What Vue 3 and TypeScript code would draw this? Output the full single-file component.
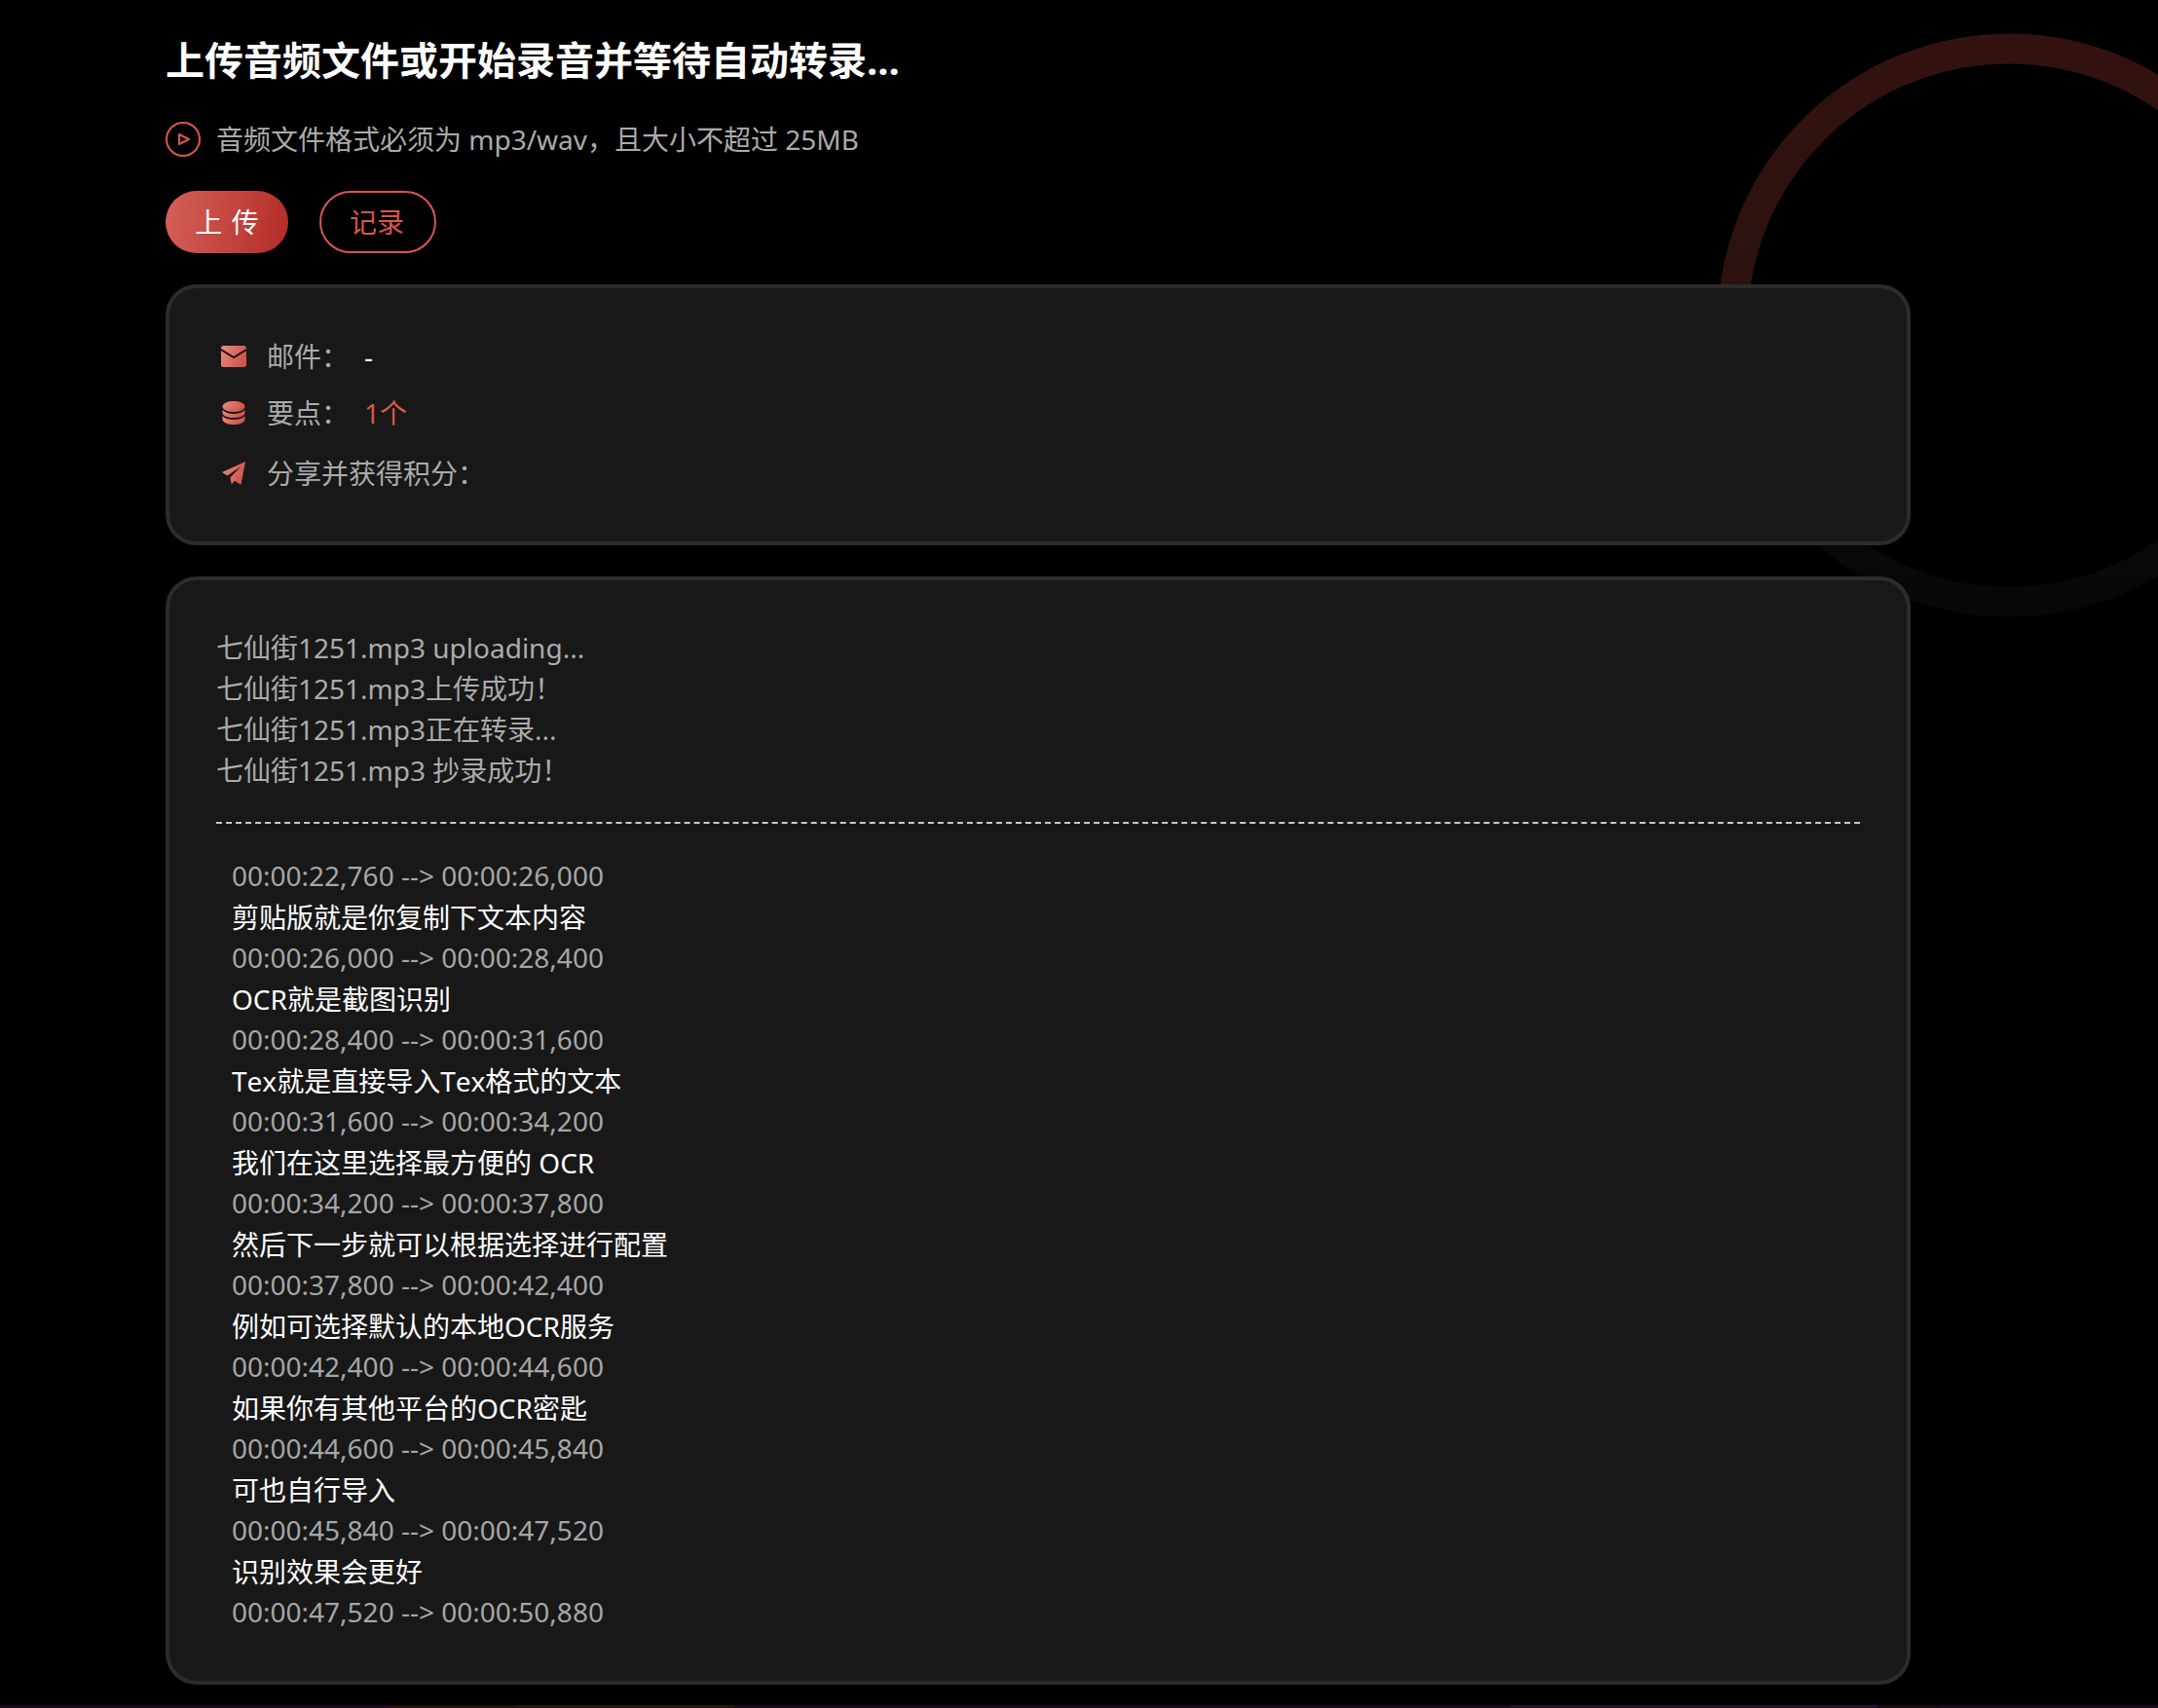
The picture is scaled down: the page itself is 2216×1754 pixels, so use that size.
<script setup lang="ts">
interface Cue { time: string; text: string }
const status: string[] = [
  '七仙街1251.mp3 uploading...',
  '七仙街1251.mp3上传成功！',
  '七仙街1251.mp3正在转录...',
  '七仙街1251.mp3 抄录成功！',
]
const cues: Cue[] = [
  { time: '00:00:22,760 --> 00:00:26,000', text: '剪贴版就是你复制下文本内容' },
  { time: '00:00:26,000 --> 00:00:28,400', text: 'OCR就是截图识别' },
  { time: '00:00:28,400 --> 00:00:31,600', text: 'Tex就是直接导入Tex格式的文本' },
  { time: '00:00:31,600 --> 00:00:34,200', text: '我们在这里选择最方便的 OCR' },
  { time: '00:00:34,200 --> 00:00:37,800', text: '然后下一步就可以根据选择进行配置' },
  { time: '00:00:37,800 --> 00:00:42,400', text: '例如可选择默认的本地OCR服务' },
  { time: '00:00:42,400 --> 00:00:44,600', text: '如果你有其他平台的OCR密匙' },
  { time: '00:00:44,600 --> 00:00:45,840', text: '可也自行导入' },
  { time: '00:00:45,840 --> 00:00:47,520', text: '识别效果会更好' },
  { time: '00:00:47,520 --> 00:00:50,880', text: '' },
]
</script>

<template>
  <div class="page">
    <svg class="ring" width="640" height="640" viewBox="0 0 640 640" aria-hidden="true">
      <defs>
        <linearGradient id="ringGrad" x1="0" y1="0" x2="0" y2="1">
          <stop offset="0" stop-color="#33120f" />
          <stop offset="0.45" stop-color="#2a1210" />
          <stop offset="0.75" stop-color="#0c0908" />
          <stop offset="1" stop-color="#080707" />
        </linearGradient>
      </defs>
      <circle cx="320" cy="320" r="284" fill="none" stroke="url(#ringGrad)" stroke-width="31" />
    </svg>

    <div class="content">
      <h1 class="title">上传音频文件或开始录音并等待自动转录...</h1>
      <div class="hint">
        <svg class="hint-icon" width="36" height="36" viewBox="0 0 36 36" fill="none" stroke="#d9574e" stroke-width="2">
          <circle cx="18" cy="18" r="17" />
          <path d="M14 13 L24 18 L14 23 Z" stroke-linejoin="round" />
        </svg>
        <span>音频文件格式必须为 mp3/wav，且大小不超过 25MB</span>
      </div>
      <div class="actions">
        <button class="btn btn-primary">上 传</button>
        <button class="btn btn-outline">记录</button>
      </div>

      <section class="card info">
        <div class="row">
          <span class="row-icon">
            <svg width="26" height="22" viewBox="0 0 26 22">
              <defs>
                <linearGradient id="ig1" x1="0" y1="0" x2="1" y2="0.4">
                  <stop offset="0" stop-color="#ea8b83" />
                  <stop offset="1" stop-color="#d0544b" />
                </linearGradient>
              </defs>
              <rect width="26" height="22" rx="2.5" fill="url(#ig1)" />
              <path d="M0 4 L13 12 L26 4" fill="none" stroke="#181818" stroke-width="2" />
            </svg>
          </span>
          <span class="label">邮件：</span>
          <span class="value">-</span>
        </div>
        <div class="row row-second">
          <span class="row-icon">
            <svg width="24" height="24" viewBox="0 0 24 24">
              <defs>
                <linearGradient id="ig2" x1="0" y1="0" x2="1" y2="0.4">
                  <stop offset="0" stop-color="#ea8b83" />
                  <stop offset="1" stop-color="#d0544b" />
                </linearGradient>
              </defs>
              <path d="M12 0 C18 0 23.500 2 23.500 5.500 C23.500 9 18 11 12 11 C6 11 0.500 9 0.500 5.500 C0.500 2 6 0 12 0 Z" fill="url(#ig2)" />
              <path d="M0.500 9 C3 11.800 7 13 12 13 C17 13 21 11.800 23.500 9 L23.500 12 C23.500 15 18 17 12 17 C6 17 0.500 15 0.500 12 Z" fill="url(#ig2)" />
              <path d="M0.500 15.200 C3 17.800 7 19 12 19 C17 19 21 17.800 23.500 15.200 L23.500 18.500 C23.500 22 18 24 12 24 C6 24 0.500 22 0.500 18.500 Z" fill="url(#ig2)" />
            </svg>
          </span>
          <span class="label">要点：</span>
          <span class="value accent">1个</span>
        </div>
        <div class="row row-third">
          <span class="row-icon">
            <svg width="24" height="24" viewBox="0 0 24 24">
              <defs>
                <linearGradient id="ig3" x1="0" y1="0" x2="1" y2="0.4">
                  <stop offset="0" stop-color="#ea8b83" />
                  <stop offset="1" stop-color="#d0544b" />
                </linearGradient>
              </defs>
              <path d="M24 0 L19.500 24 L13 19.800 L9.800 23.500 L8.300 16.500 L19.500 5 L5.500 14.500 L0 11 Z" fill="url(#ig3)" />
            </svg>
          </span>
          <span class="label">分享并获得积分：</span>
        </div>
      </section>

      <section class="card log">
        <p v-for="line in status" :key="line" class="status">{{ line }}</p>
        <div class="divider"></div>
        <div class="cues">
          <template v-for="cue in cues" :key="cue.time">
            <p class="time">{{ cue.time }}</p>
            <p v-if="cue.text" class="text">{{ cue.text }}</p>
          </template>
        </div>
      </section>
    </div>
    <div class="strip"></div>
  </div>
</template>

<style>
html, body { margin: 0; background: #000; }
</style>

<style scoped>
.page {
  position: relative;
  width: 2216px;
  height: 1754px;
  overflow: hidden;
  background: #000;
  font-family: "Noto Sans", "Noto Sans CJK SC", sans-serif;
  font-size: 28px;
  line-height: 42px;
}
.ring { position: absolute; left: 1743px; top: 14px; }
.content {
  position: relative;
  box-sizing: border-box;
  width: 1792px;
  margin-left: 170px;
  padding-top: 32px;
}
.title {
  margin: 0;
  font-size: 40px;
  line-height: 60px;
  font-weight: 700;
  color: #fff;
}
.hint {
  display: flex;
  align-items: center;
  gap: 16px;
  margin-top: 30px;
  color: #ababab;
}
.hint-icon { flex: none; }
.actions {
  display: flex;
  gap: 32px;
  margin-top: 32px;
}
.btn {
  box-sizing: border-box;
  height: 64px;
  border-radius: 32px;
  font: inherit;
  padding: 0;
}
.btn-primary {
  width: 126px;
  border: none;
  color: #fff;
  word-spacing: 2px;
  background: linear-gradient(100deg, #d6605a, #b32c27);
}
.btn-outline {
  width: 120px;
  border: 2px solid #d9574e;
  background: transparent;
  color: #d9574e;
  padding-right: 2px;
}
.card {
  box-sizing: border-box;
  border: 4px solid #2c2c2e;
  border-radius: 32px;
  background: #181818;
}
.info {
  margin-top: 32px;
  height: 268px;
  padding: 49px 48px 0;
}
.row { display: flex; align-items: center; color: #ababab; }
.row-second { margin-top: 16px; }
.row-third { margin-top: 20px; }
.row-icon {
  flex: none;
  width: 36px;
  margin-right: 16px;
  display: flex;
  justify-content: center;
}
.label { min-width: 84px; }
.value { margin-left: 16px; color: #fff; }
.accent { color: #d9574e; }
.log {
  margin-top: 32px;
  height: 1138px;
  padding: 48px 48px 0;
}
.status { margin: 0; color: #ababab; }
.divider {
  margin-top: 32px;
  border-top: 2px dashed #c8c8c8;
}
.cues {
  margin-top: 32px;
  padding-left: 16px;
}
.time { margin: 0; color: #a6a6a6; }
.text {
  margin: 0 0 -1px;
  padding-top: 1px;
  color: #fff;
  font-kerning: none;
}
.strip {
  position: absolute;
  left: 0;
  right: 0;
  bottom: 0;
  height: 3px;
  background: linear-gradient(90deg, #1c0a1e 0 18%, #2a0e10 18% 24%, #30120c 24% 34%, #1e0a1c 34% 70%, #2c0f2c 70% 87%, #180a10 87% 90%, #1e0a1e 90%);
}
</style>
